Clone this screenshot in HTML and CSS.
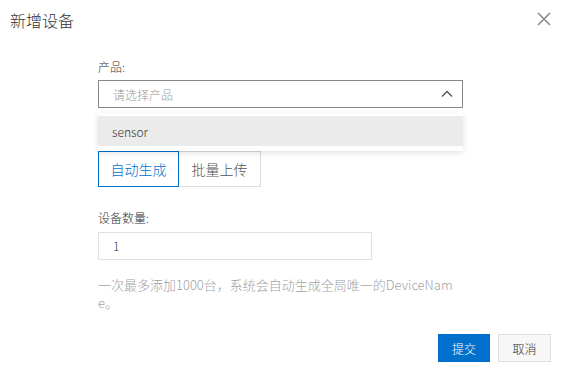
FILE: index.html
```html
<!DOCTYPE html>
<html lang="zh">
<head>
<meta charset="utf-8">
<title>新增设备</title>
<link rel="stylesheet" href="styles.css">
</head>
<body>
<div class="dialog">
  <div class="dialog-header">
    <span class="dialog-title">新增设备</span>
    <button class="close" aria-label="关闭">
      <svg width="14" height="14" viewBox="0 0 14 14"><path d="M1 1L13 13M13 1L1 13" stroke="#8c8c8c" stroke-width="1.6" fill="none"/></svg>
    </button>
  </div>
  <div class="dialog-body">
    <div class="field-label">产品:</div>
    <div class="select">
      <span class="placeholder">请选择产品</span>
      <svg class="arrow" width="12" height="8" viewBox="0 0 12 8"><path d="M1 6.5L6 1.5L11 6.5" stroke="#555" stroke-width="1.4" fill="none"/></svg>
      <div class="dropdown">
        <div class="option active">sensor</div>
      </div>
    </div>
    <div class="tabs">
      <div class="tab selected">自动生成</div>
      <div class="tab">批量上传</div>
    </div>
    <div class="field-label second">设备数量:</div>
    <div class="input">1</div>
    <p class="help">一次最多添加1000台，系统会自动生成全局唯一的DeviceName。</p>
  </div>
  <div class="dialog-footer">
    <button class="btn primary">提交</button>
    <button class="btn">取消</button>
  </div>
</div>
</body>
</html>
```

FILE: styles.css
```css
html, body {
  margin: 0;
  padding: 0;
  background: #fff;
}
body {
  font-family: "Noto Sans CJK SC", "Noto Sans", sans-serif;
  font-weight: 300;
  color: #333;
}
.dialog {
  width: 561px;
  height: 373px;
  display: flex;
  flex-direction: column;
}
.dialog-header {
  display: flex;
  justify-content: space-between;
  align-items: center;
  padding: 5px 10px 0 10px;
  height: 29px;
}
.dialog-title {
  font-size: 16px;
  line-height: 24px;
  color: #333;
}
.close {
  border: 0;
  background: none;
  padding: 0;
  width: 14px;
  height: 14px;
  display: flex;
  margin-top: -1px;
}
.dialog-body {
  padding: 24px 0 0 98px;
  width: 365px;
}
.field-label {
  font-size: 12px;
  line-height: 18px;
  color: #333;
}
.field-label.second {
  margin-top: 22px;
}
.select {
  position: relative;
  margin-top: 4px;
  height: 28px;
  box-sizing: border-box;
  border: 1px solid #888;
  display: flex;
  align-items: center;
  justify-content: space-between;
  padding: 0 9px 0 14px;
}
.placeholder {
  font-size: 12px;
  color: #999;
}
.arrow {
  display: block;
}
.dropdown {
  position: absolute;
  left: -1px;
  right: -1px;
  top: calc(100% + 6px);
  background: #fff;
  padding: 3px 0 5px;
  box-shadow: 0 2px 6px rgba(0, 0, 0, 0.12);
  z-index: 2;
}
.option {
  height: 30px;
  line-height: 31px;
  padding-left: 14px;
  font-size: 12px;
  color: #333;
}
.option.active {
  background: #ebebeb;
}
.tabs {
  display: flex;
  margin-top: 43px;
}
.tab {
  width: 82px;
  height: 36px;
  box-sizing: border-box;
  border: 1px solid #dcdcdc;
  display: flex;
  align-items: center;
  justify-content: center;
  font-size: 14px;
  color: #555;
}
.tab + .tab {
  border-left: 0;
}
.tab.selected {
  width: 81px;
  border-color: #0070cc;
  color: #0070cc;
}
.input {
  margin-top: 5px;
  width: 274px;
  height: 28px;
  box-sizing: border-box;
  border: 1px solid #e0e0e0;
  font-size: 12px;
  line-height: 26px;
  padding-left: 14px;
  color: #333;
}
.help {
  margin: 16px 0 0 0;
  font-size: 13px;
  line-height: 18px;
  color: #a3a3a3;
  word-break: break-all;
}
.dialog-footer {
  display: flex;
  justify-content: flex-end;
  gap: 8px;
  padding: 0 10px;
  margin-top: 22px;
}
.btn {
  font-family: inherit;
  font-weight: 300;
  height: 28px;
  width: 53px;
  box-sizing: border-box;
  border: 1px solid #ddd;
  background: #f7f7f7;
  font-size: 12px;
  color: #333;
  padding: 0;
}
.btn.primary {
  width: 52px;
  background: #0070cc;
  border-color: #0070cc;
  color: #fff;
}
```
